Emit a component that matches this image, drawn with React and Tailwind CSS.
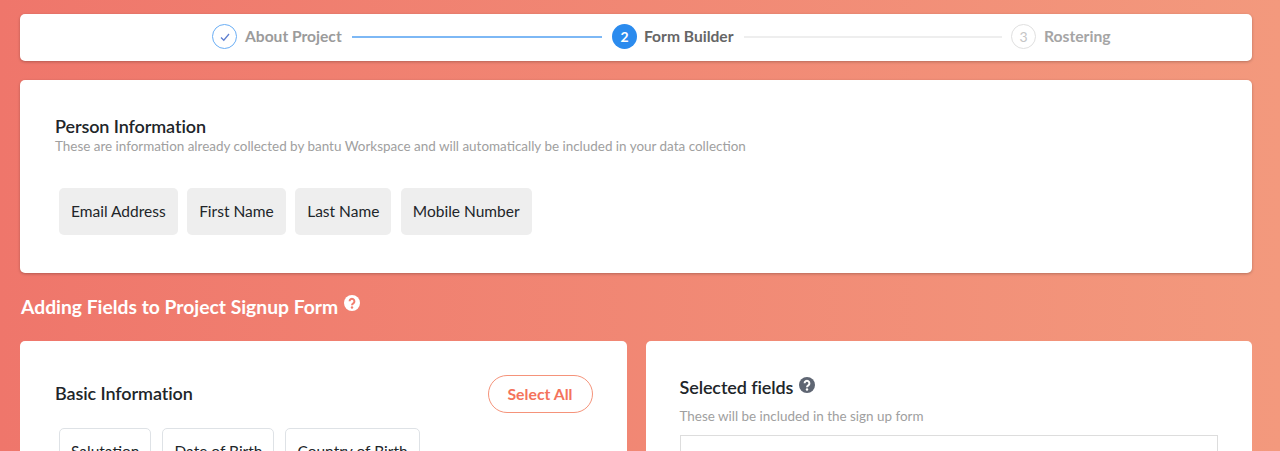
const Help = ({ bg, fg, cls }) => (
  <svg viewBox="0 0 16 16" className={cls}>
    <circle cx="8" cy="8" r="8" fill={bg} />
    <path d="M5.6 6.3a2.4 2.4 0 1 1 3.7 2c-.9.6-1.3 1-1.3 1.9" fill="none" stroke={fg} strokeWidth="2" />
    <circle cx="8" cy="12.5" r="1.2" fill={fg} />
  </svg>
);

const Chip = ({ children }) => (
  <div className="h-[47px] px-3 flex items-center rounded-[5px] bg-[#eeeeee] text-[15.5px] text-[#212529]">{children}</div>
);

const OutChip = ({ children }) => (
  <div className="h-[47px] px-[11px] pt-[11px] rounded-[5px] border border-[#dee2e6] bg-white text-[15.5px] text-[#212529]">{children}</div>
);

export default function App() {
  return (
    <div className="h-[451px] overflow-hidden bg-[linear-gradient(90deg,#ef766b_0%,#f3997d_100%)] pl-5 pr-7 pt-[14px] font-['Lato',sans-serif]">
      <div className="h-[47px] bg-white rounded-[5px] shadow-[0_1px_3px_rgba(0,0,0,0.25)] flex items-center pl-[192px] pb-[2px]">
        <div className="w-[25px] h-[25px] rounded-full border-[1.5px] border-[#6aaef5] flex items-center justify-center">
          <svg viewBox="0 0 12 12" className="w-[12px] h-[12px]" fill="none" stroke="#5f7fd0" strokeWidth="1.3">
            <path d="M2 6.5 4.8 9.2 10 3" />
          </svg>
        </div>
        <span className="ml-2 w-[97px] text-[15.6px] font-bold text-[#9b9b9b]">About Project</span>
        <div className="ml-[10px] w-[250px] h-[2px] bg-[#7db8f5]" />
        <div className="ml-[10px] w-[25px] h-[25px] rounded-full bg-[#2b8bee] text-white text-[14px] font-bold flex items-center justify-center">2</div>
        <span className="ml-[7px] w-[90px] text-[15.6px] font-bold text-[#666666]">Form Builder</span>
        <div className="ml-[10px] w-[258px] h-[2px] bg-[#eeeeee]" />
        <div className="ml-[9px] w-[25px] h-[25px] rounded-full border-[1.5px] border-[#e0e0e0] text-[#c5c5c5] text-[14px] flex items-center justify-center">3</div>
        <span className="ml-2 text-[15.7px] font-bold text-[#a5a5a5]">Rostering</span>
      </div>

      <div className="mt-[19px] h-[193px] bg-white rounded-[5px] shadow-[0_1px_3px_rgba(0,0,0,0.25)] pt-[35px] pl-[35px]">
        <h2 className="text-[18px] leading-[22px] font-semibold text-[#212529] tracking-[-0.1px]">Person Information</h2>
        <p className="text-[13.44px] leading-[18px] text-[#a0a0a0]">These are information already collected by bantu Workspace and will automatically be included in your data collection</p>
        <div className="mt-[33px] ml-1 flex gap-[9.5px]">
          <Chip>Email Address</Chip>
          <Chip>First Name</Chip>
          <Chip>Last Name</Chip>
          <Chip>Mobile Number</Chip>
        </div>
      </div>

      <div className="mt-[21px] flex items-start">
        <h2 className="ml-px text-[19.3px] leading-[26px] font-bold text-white">Adding Fields to Project Signup Form</h2>
        <Help bg="#ffffff" fg="#f27d6e" cls="ml-[6px] w-4 h-4 mt-px" />
      </div>

      <div className="mt-[21px] grid grid-cols-2 gap-[19px]">
        <div className="h-[200px] bg-white rounded-[5px] pt-[34px] pl-[35px] pr-[34px]">
          <div className="flex items-center justify-between">
            <h2 className="-mt-[2px] text-[18px] font-semibold text-[#212529] tracking-[-0.1px]">Basic Information</h2>
            <div className="w-[105px] h-[38px] rounded-full border-[1.5px] border-[#f5937a] text-[#f4735c] text-[15.8px] font-bold flex items-center justify-center">Select All</div>
          </div>
          <div className="mt-[15px] ml-1 flex gap-[11px]">
            <OutChip>Salutation</OutChip>
            <OutChip>Date of Birth</OutChip>
            <OutChip>Country of Birth</OutChip>
          </div>
        </div>
        <div className="h-[200px] bg-white rounded-[5px] pt-[35px] px-[34px]">
          <div className="flex items-center">
            <h2 className="text-[18px] leading-[22px] font-semibold text-[#212529] tracking-[-0.1px]">Selected fields</h2>
            <Help bg="#5f6673" fg="#ffffff" cls="ml-[6px] w-4 h-4 mt-[-4px]" />
          </div>
          <p className="mt-[9px] text-[13.44px] leading-[18px] text-[#a0a0a0]">These will be included in the sign up form</p>
          <div className="mt-[10px] h-[60px] border border-[#dddddd]" />
        </div>
      </div>
    </div>
  );
}
